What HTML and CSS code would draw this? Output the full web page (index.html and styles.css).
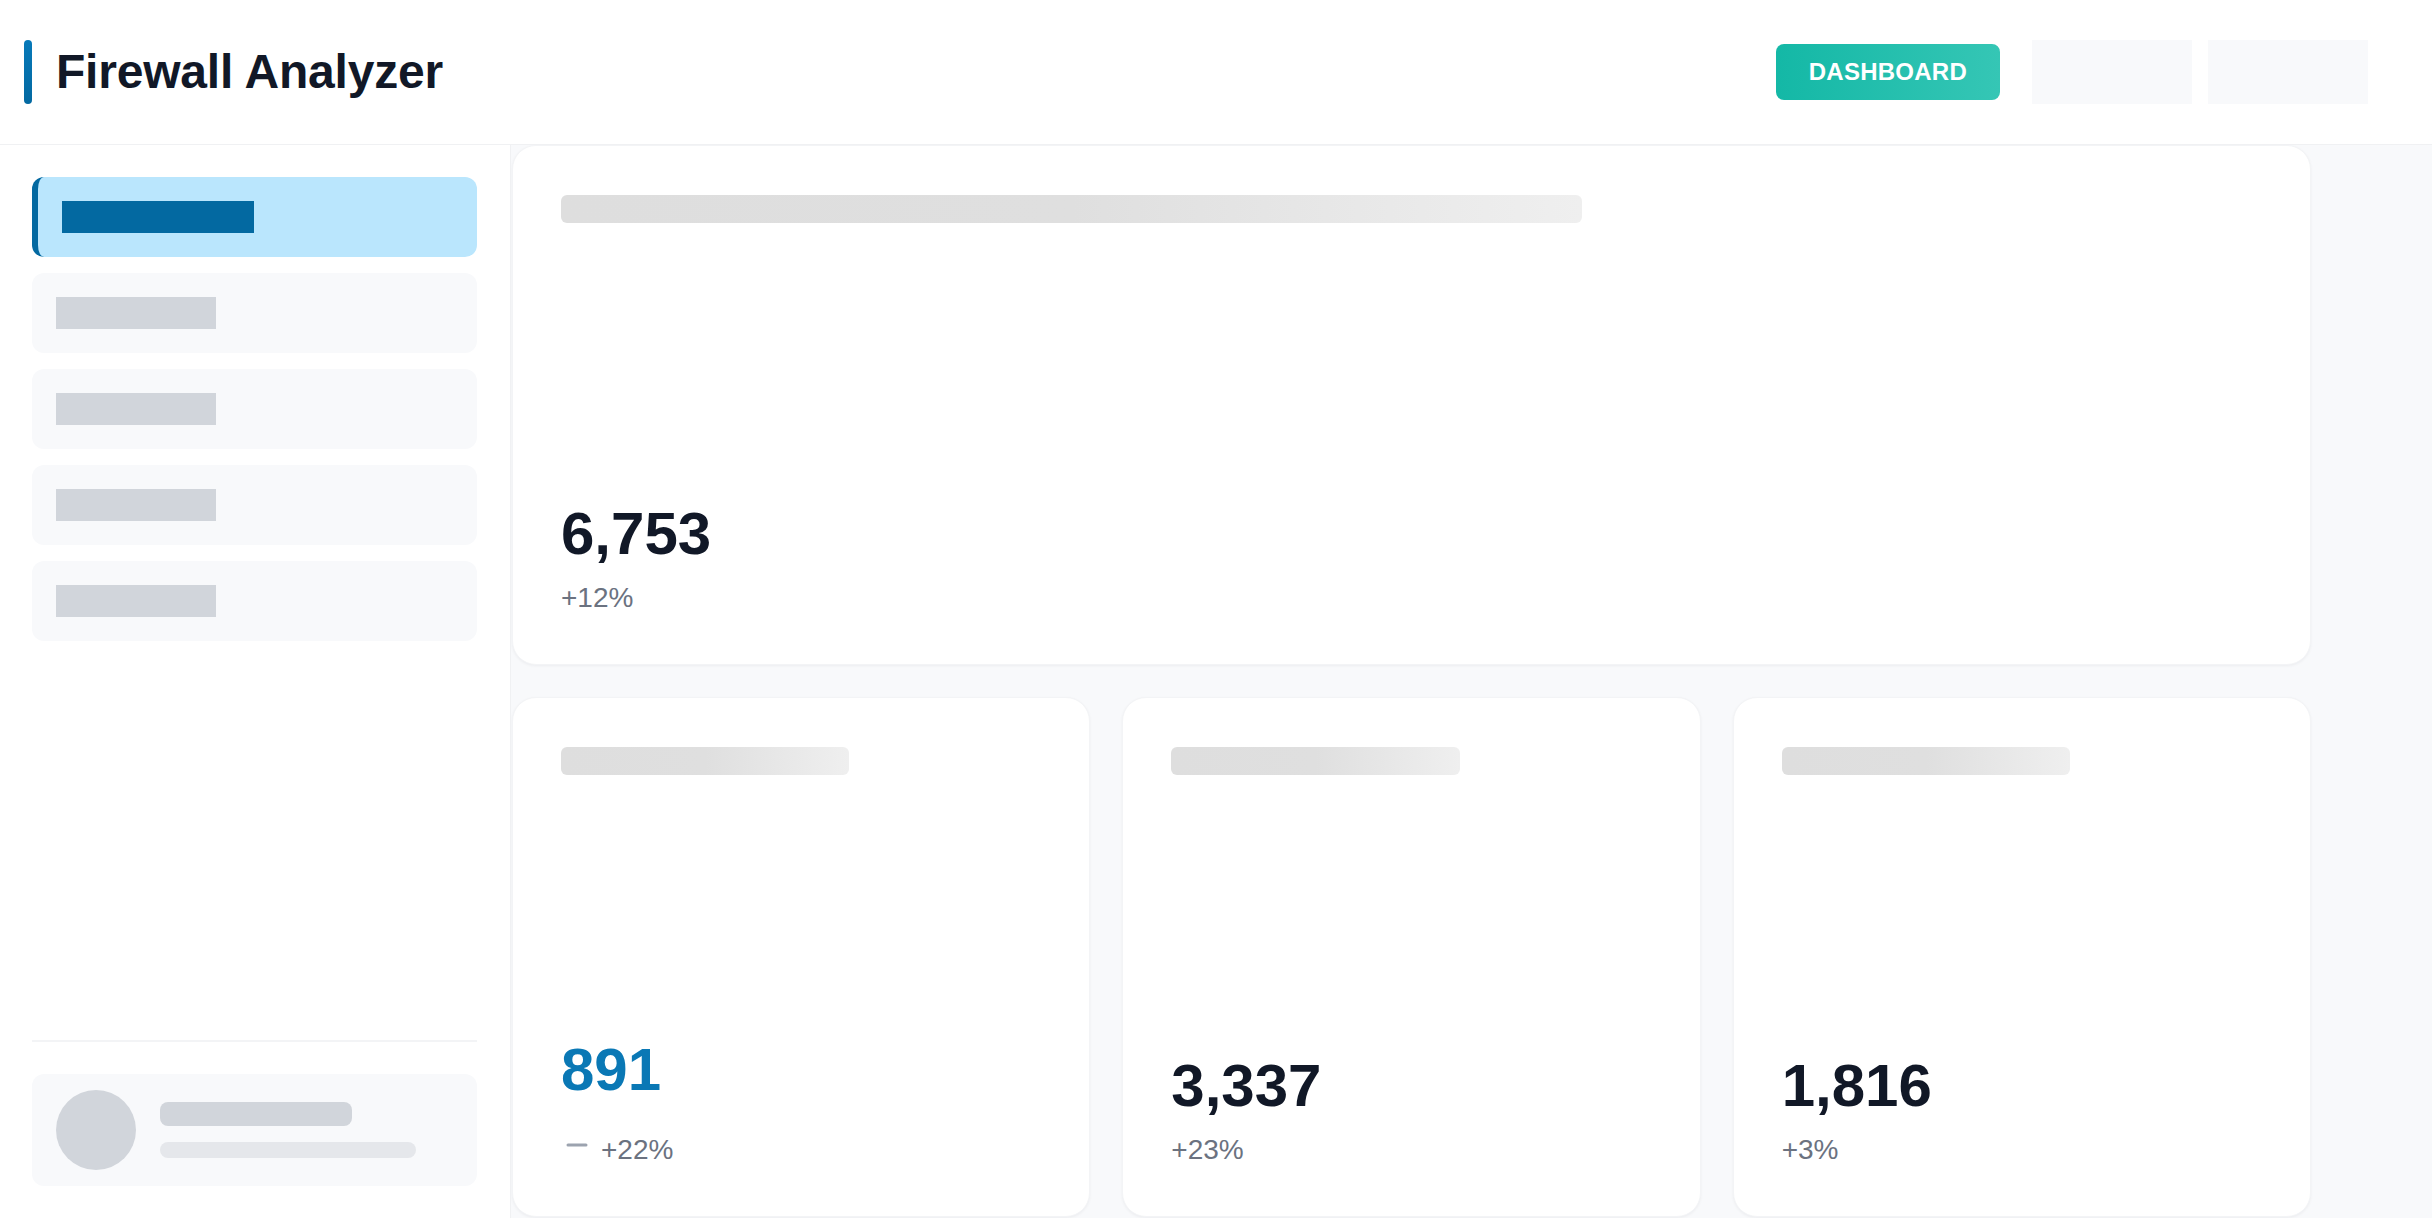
FILE: index.html
```html
<!DOCTYPE html>
<html lang="en">
<head>
<meta charset="utf-8">
<title>Firewall Analyzer</title>
<link rel="stylesheet" href="styles.css">
</head>
<body>
<div class="app">
  <header class="topbar">
    <div class="brand">
      <span class="brand-accent"></span>
      <h1 class="brand-title">Firewall Analyzer</h1>
    </div>
    <div class="top-actions">
      <button class="btn-primary">DASHBOARD</button>
      <div class="top-placeholder"></div>
      <div class="top-placeholder"></div>
    </div>
  </header>
  <div class="body">
    <aside class="sidebar">
      <nav class="nav">
        <div class="nav-item active"><span class="nav-bar"></span></div>
        <div class="nav-item"><span class="nav-bar"></span></div>
        <div class="nav-item"><span class="nav-bar"></span></div>
        <div class="nav-item"><span class="nav-bar"></span></div>
        <div class="nav-item"><span class="nav-bar"></span></div>
      </nav>
      <div class="sidebar-footer">
        <div class="user-card">
          <span class="avatar"></span>
          <div class="user-lines">
            <span class="line-name"></span>
            <span class="line-sub"></span>
          </div>
        </div>
      </div>
    </aside>
    <main class="main">
      <div class="grid">
        <section class="card card-wide">
          <div class="skeleton"></div>
          <div class="stat">
            <div class="stat-value">6,753</div>
            <div class="stat-change">+12%</div>
          </div>
        </section>
        <section class="card">
          <div class="skeleton"></div>
          <div class="stat">
            <div class="stat-value accent">891</div>
            <div class="stat-change">
              <svg class="trend-icon" width="32" height="52" viewBox="0 0 32 52" aria-hidden="true"><line x1="7" y1="29" x2="25" y2="29" stroke="#9ca3af" stroke-width="3" stroke-linecap="round"/></svg>
              <span>+22%</span>
            </div>
          </div>
        </section>
        <section class="card">
          <div class="skeleton"></div>
          <div class="stat">
            <div class="stat-value">3,337</div>
            <div class="stat-change">+23%</div>
          </div>
        </section>
        <section class="card">
          <div class="skeleton"></div>
          <div class="stat">
            <div class="stat-value">1,816</div>
            <div class="stat-change">+3%</div>
          </div>
        </section>
      </div>
    </main>
  </div>
</div>
</body>
</html>
```

FILE: styles.css
```css
* { box-sizing: border-box; }
html, body {
  margin: 0;
  padding: 0;
  height: 100%;
  overflow: hidden;
}
body {
  font-family: "Liberation Sans", Arial, sans-serif;
  background: #ffffff;
  color: #111827;
}
.app {
  display: flex;
  flex-direction: column;
  height: 1218px;
}
.topbar {
  height: 145px;
  flex: 0 0 145px;
  display: flex;
  align-items: center;
  justify-content: space-between;
  padding: 0 64px 0 24px;
  border-bottom: 1px solid #f0f1f3;
  background: #ffffff;
}
.brand {
  display: flex;
  align-items: center;
  gap: 24px;
}
.brand-accent {
  width: 8px;
  height: 64px;
  border-radius: 4px;
  background: linear-gradient(180deg, #0779b9, #0369a1);
}
.brand-title {
  margin: 0;
  font-size: 48px;
  font-weight: 700;
  line-height: 64px;
  color: #111827;
  letter-spacing: -0.2px;
}
.top-actions {
  display: flex;
  align-items: center;
  gap: 16px;
}
.btn-primary {
  height: 56px;
  padding: 0 33px;
  margin-right: 16px;
  border: none;
  border-radius: 8px;
  background: linear-gradient(90deg, #14b8a6, #35c6b5);
  color: #ffffff;
  font-family: "Liberation Sans", Arial, sans-serif;
  font-size: 24px;
  font-weight: 700;
  letter-spacing: 0.25px;
}
.top-placeholder {
  width: 160px;
  height: 64px;
  background: #f8f9fb;
}
.body {
  flex: 1;
  display: flex;
  min-height: 0;
}
.sidebar {
  width: 511px;
  flex: 0 0 511px;
  display: flex;
  flex-direction: column;
  padding: 32px 33px 32px 32px;
  border-right: 1px solid #f0f1f3;
  background: #ffffff;
}
.nav {
  display: flex;
  flex-direction: column;
  gap: 16px;
}
.nav-item {
  height: 80px;
  display: flex;
  align-items: center;
  padding: 0 24px;
  border-radius: 12px;
  background: #f8f9fb;
}
.nav-bar {
  width: 160px;
  height: 32px;
  background: #d1d5db;
}
.nav-item.active {
  background: #bae6fd;
  border-left: 6px solid #0369a1;
}
.nav-item.active .nav-bar {
  width: 192px;
  background: #0369a1;
}
.sidebar-footer {
  margin-top: auto;
  border-top: 2px solid #f3f4f6;
  padding-top: 32px;
}
.user-card {
  height: 112px;
  display: flex;
  align-items: center;
  gap: 24px;
  padding: 16px 24px;
  border-radius: 12px;
  background: #f8f9fb;
}
.avatar {
  width: 80px;
  height: 80px;
  border-radius: 50%;
  background: #d1d5db;
  flex: 0 0 80px;
}
.user-lines {
  display: flex;
  flex-direction: column;
  gap: 16px;
}
.line-name {
  width: 192px;
  height: 24px;
  border-radius: 8px;
  background: #d1d5db;
}
.line-sub {
  width: 256px;
  height: 16px;
  border-radius: 8px;
  background: #e5e7eb;
}
.main {
  flex: 1;
  background: #f8f9fb;
  padding: 0 121px 0 1px;
  overflow: hidden;
}
.grid {
  display: grid;
  grid-template-columns: repeat(3, 1fr);
  grid-auto-rows: 520px;
  gap: 32px;
}
.card {
  display: flex;
  flex-direction: column;
  padding: 49px 48px 48px 48px;
  background: #ffffff;
  border: 1px solid #f3f4f6;
  border-radius: 24px;
  box-shadow: 0 1px 3px rgba(17, 24, 39, 0.05);
}
.card-wide {
  grid-column: 1 / -1;
}
.skeleton {
  width: 60%;
  height: 28px;
  border-radius: 6px;
  background: linear-gradient(90deg, #dedede 0%, #dfdfdf 50%, #efefef 100%);
}
.stat {
  margin-top: auto;
  display: flex;
  flex-direction: column;
  gap: 16px;
}
.stat-value {
  font-size: 60px;
  font-weight: 700;
  line-height: 60px;
  color: #111827;
}
.stat-value.accent {
  color: #0a78b5;
}
.stat-change {
  display: flex;
  align-items: flex-end;
  gap: 8px;
  font-size: 28px;
  line-height: 36px;
  color: #6b7280;
}
.trend-icon {
  display: block;
  flex: 0 0 32px;
}
```
